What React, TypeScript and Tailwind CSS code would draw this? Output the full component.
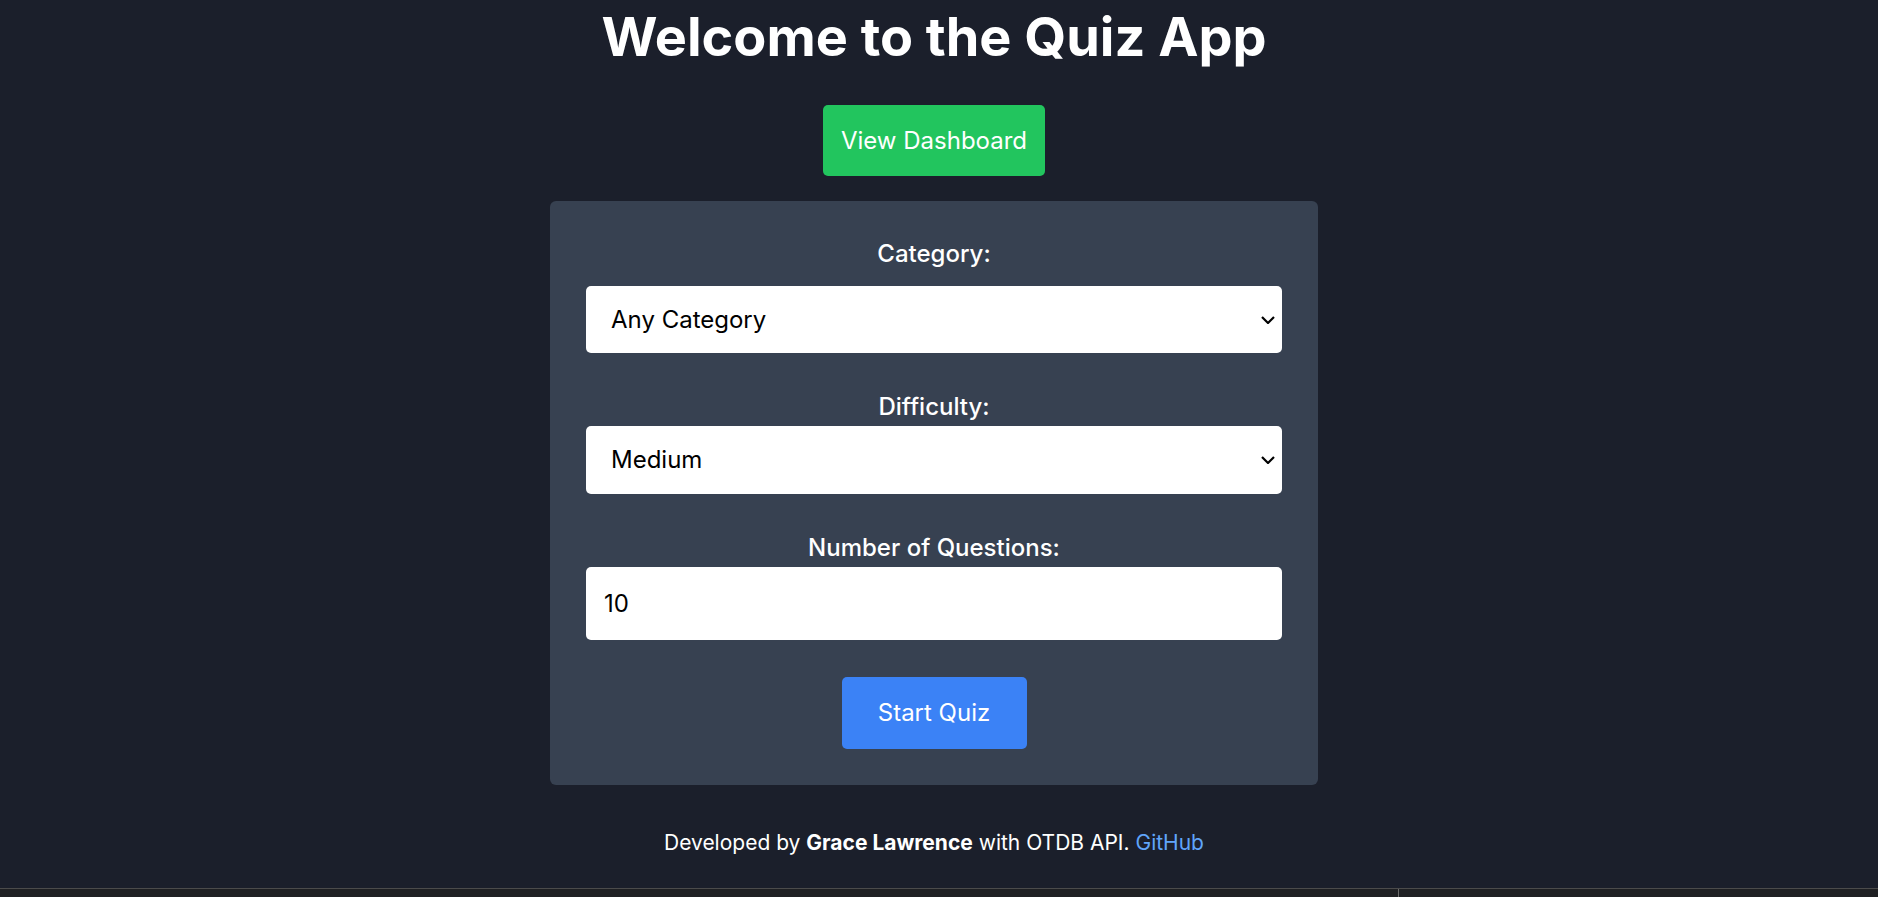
import React, { useState } from "react";

const categories = ["Any Category", "General Knowledge", "Entertainment: Books", "Science & Nature", "History"];
const difficulties = ["Easy", "Medium", "Hard"];

const Chevron = () => (
  <svg
    width="14"
    height="8"
    viewBox="0 0 14 8"
    fill="none"
    stroke="black"
    strokeWidth="2.2"
    className="absolute right-[7px] top-1/2 -translate-y-1/2 pointer-events-none"
  >
    <path d="M1 1l6 6 6-6" />
  </svg>
);

const App = () => {
  const [category, setCategory] = useState("Any Category");
  const [difficulty, setDifficulty] = useState("Medium");
  const [amount, setAmount] = useState("10");

  return (
    <div className="h-screen flex flex-col bg-[#1b1f2b] text-white font-['Inter',sans-serif] overflow-hidden">
      <main className="flex-1 flex flex-col items-center pr-[10px]">
        <h1 className="mt-[10px] text-[54px] leading-[54px] font-bold">Welcome to the Quiz App</h1>

        <button className="mt-[41px] px-[18px] py-[19px] leading-[33px] text-[24px] bg-[#22c55e] rounded-[5px]">
          View Dashboard
        </button>

        <div className="mt-[25px] w-[768px] bg-[#374151] rounded-[6px] px-[36px] pt-[38px] pb-[36px] flex flex-col items-center">
          <label className="text-[24px] leading-[30px] font-medium mb-[17px]">Category:</label>
          <div className="relative w-full">
            <select
              value={category}
              onChange={(e) => setCategory(e.target.value)}
              className="appearance-none w-full h-[67px] pl-[25px] pr-[30px] bg-white text-black text-[24px] rounded-[5px] outline-none"
            >
              {categories.map((c) => (
                <option key={c}>{c}</option>
              ))}
            </select>
            <Chevron />
          </div>

          <label className="mt-[39px] mb-[4px] text-[24px] leading-[30px] font-medium">Difficulty:</label>
          <div className="relative w-full">
            <select
              value={difficulty}
              onChange={(e) => setDifficulty(e.target.value)}
              className="appearance-none w-full h-[68px] pl-[25px] pr-[30px] bg-white text-black text-[24px] rounded-[5px] outline-none"
            >
              {difficulties.map((d) => (
                <option key={d}>{d}</option>
              ))}
            </select>
            <Chevron />
          </div>

          <label className="mt-[39px] mb-[4px] text-[24px] leading-[30px] font-medium">Number of Questions:</label>
          <input
            type="number"
            value={amount}
            onChange={(e) => setAmount(e.target.value)}
            className="w-full h-[73px] px-[18px] bg-white text-black text-[24px] rounded-[5px] outline-none"
          />

          <button className="mt-[37px] w-[185px] h-[72px] text-[24px] bg-[#3b82f6] rounded-[5px]">Start Quiz</button>
        </div>

        <p className="mt-[43px] text-[21px] leading-[30px]">
          Developed by <span className="font-bold">Grace Lawrence</span> with OTDB API.{" "}
          <a href="#" className="text-[#60a5fa]">GitHub</a>
        </p>
      </main>

      {/* bottom strip from the captured window */}
      <div className="h-[9px] border-t border-[#4b4b4b] bg-[#1f2023] flex">
        <div className="w-[1398px] h-full" />
        <div className="w-px h-full bg-[#6b6b6b]" />
      </div>
    </div>
  );
};

export default App;
